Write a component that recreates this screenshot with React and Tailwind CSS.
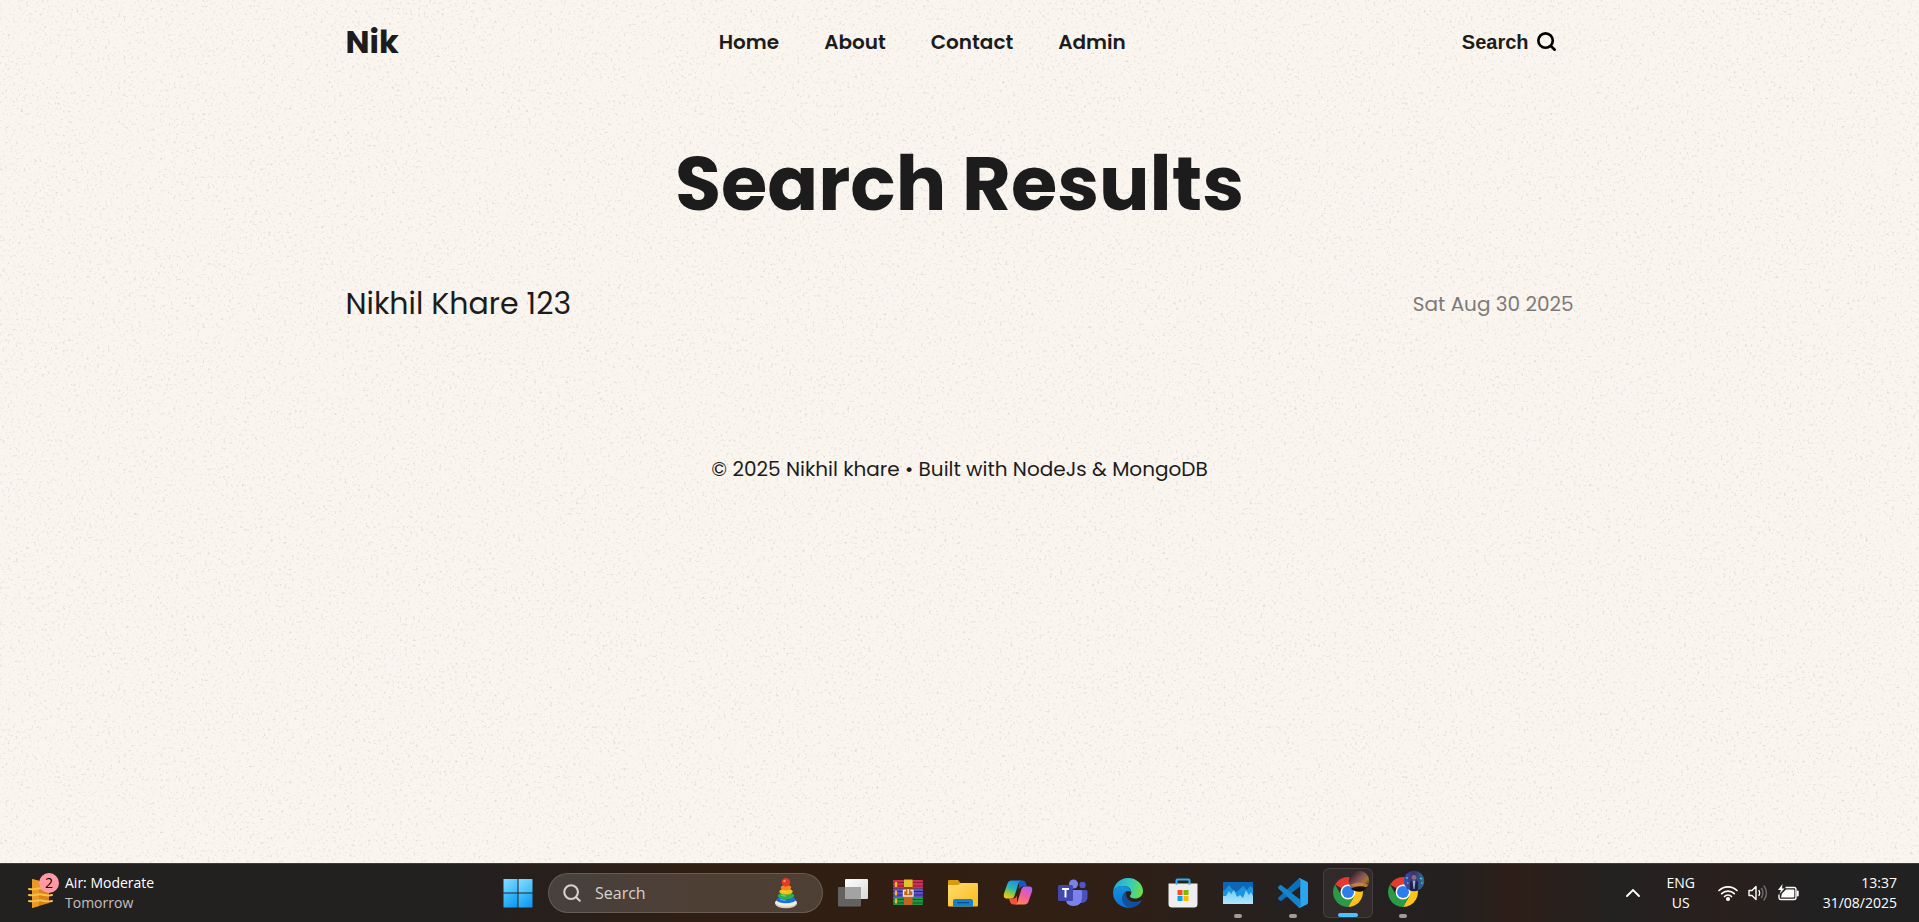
import React from 'react';

const NAV = ['Home', 'About', 'Contact', 'Admin'];
const POSTS = [{ title: 'Nikhil Khare 123', date: 'Sat Aug 30 2025' }];

function Grain() {
  return (
    <svg aria-hidden="true" className="absolute inset-0 -z-10 h-full w-full">
      <filter id="grain" x="0" y="0" width="100%" height="100%" colorInterpolationFilters="sRGB">
        <feTurbulence type="fractalNoise" baseFrequency="0.38" numOctaves="4" seed="7" />
        <feColorMatrix values="0 0 0 0 0.45  0 0 0 0 0.44  0 0 0 0 0.42  0.65 0 0 0 -0.375" />
      </filter>
      <rect width="100%" height="100%" filter="url(#grain)" />
    </svg>
  );
}

function SearchIcon({ className, strokeWidth = 2.3 }) {
  return (
    <svg viewBox="0 0 20 20" className={className} fill="none" stroke="currentColor" strokeWidth={strokeWidth} strokeLinecap="round">
      <circle cx="9" cy="9" r="7.6" />
      <path d="M14.6 14.8 18.6 18.6" />
    </svg>
  );
}

function WeatherIcon() {
  return (
    <svg viewBox="0 0 26 32" className="h-8 w-[26px]">
      <path d="M4 2 21 6V26L4 31Z" fill="#d98218" />
      <path d="M4 2 11 4V29L4 31Z" fill="#ea9a24" />
      <g fill="none" stroke="#f7c04a" strokeWidth="2" strokeLinecap="round">
        <path d="M1 12c5 1.500 8-1.500 13-.5s7 1.500 10 .5" />
        <path d="M1 18c5 1.500 8-1.500 13-.5s7 1.500 10 .5" />
        <path d="M1 24c5 1.500 8-1.500 13-.5s7 1.500 10 .5" />
      </g>
    </svg>
  );
}

function StartIcon() {
  return (
    <svg viewBox="0 0 30 30" className="h-[30px] w-[30px]">
      <defs>
        <linearGradient id="win" x1="0" y1="0" x2="1" y2="1">
          <stop offset="0" stopColor="#86dcff" />
          <stop offset="1" stopColor="#36b9f8" />
        </linearGradient>
        <linearGradient id="win2" x1="0" y1="0" x2="1" y2="1">
          <stop offset="0" stopColor="#47c5fb" />
          <stop offset="1" stopColor="#0b93f0" />
        </linearGradient>
      </defs>
      <path d="M1 1h13.500v13.500H.5V1.500z" fill="url(#win)" />
      <path d="M15.500 1H29q.5 0 .5.500v13h-14z" fill="url(#win)" />
      <path d="M.5 15.500h14v14H1q-.5 0-.5-.5z" fill="url(#win2)" />
      <path d="M15.500 15.500h14V29q0 .5-.5.500H15.500z" fill="url(#win2)" />
    </svg>
  );
}

function ToyIcon() {
  return (
    <svg viewBox="0 0 24 32" className="h-8 w-6">
      <ellipse cx="12" cy="26.500" rx="11" ry="4.800" fill="#d8cdb8" />
      <ellipse cx="12" cy="25.500" rx="11" ry="4" fill="#f3ecdc" />
      <ellipse cx="12" cy="22.700" rx="9.500" ry="3.600" fill="#1673dd" />
      <ellipse cx="12" cy="18.800" rx="8.200" ry="3.300" fill="#2fae4a" />
      <ellipse cx="12" cy="14.600" rx="6.700" ry="3" fill="#f2c21b" />
      <ellipse cx="12" cy="10.600" rx="5.200" ry="2.800" fill="#f5831f" />
      <circle cx="12" cy="5.300" r="4.200" fill="#e33a25" />
      <circle cx="10.500" cy="4" r="1.300" fill="#ff8368" />
      <path d="M6 22q3 1.500 6 1.200M7 18q2 1.200 5 1M8 14q2 1 4 .8" stroke="#fff" strokeOpacity=".4" fill="none" />
    </svg>
  );
}

function TaskViewIcon() {
  return (
    <svg viewBox="0 0 30 30" className="h-[30px] w-[30px]">
      <defs>
        <linearGradient id="tv" x1="0" y1="0" x2="1" y2="1">
          <stop offset="0" stopColor="#ffffff" />
          <stop offset="1" stopColor="#d9d9d9" />
        </linearGradient>
      </defs>
      <rect x="7" y="1" width="23" height="20" rx="1" fill="url(#tv)" />
      <rect y="9" width="23" height="19.500" rx="1" fill="#636261" />
      <rect x="7" y="9" width="16" height="12" fill="#a3a3a3" />
    </svg>
  );
}

function ArchiveIcon() {
  return (
    <svg viewBox="0 0 30 30" className="h-[30px] w-[30px]">
      <rect y="2" width="30" height="8.500" rx="1" fill="#d22f55" />
      <path d="M0 4.500h30M0 8h30" stroke="#8a1733" />
      <rect y="10.500" width="30" height="8.500" rx="1" fill="#5a52c4" />
      <path d="M0 13.500h30M0 17h30" stroke="#2c2678" />
      <rect y="19" width="30" height="8" rx="1" fill="#1f9442" />
      <path d="M0 21.500h30M0 25h30" stroke="#0f5a26" />
      <path d="M3 4v5M3 12.500v5M3 20.500v5" stroke="#f0b52c" strokeWidth="2.400" />
      <rect x="11" y="2" width="8.500" height="25" fill="#c0661e" />
      <rect x="11" y="1.500" width="8.500" height="7.500" fill="#e2c12e" />
      <rect x="11" y="9" width="8.500" height="2" fill="#8a4210" />
      <path d="M13 12.500h-2.500v5.500h9.500v-5.500H17.500M15.200 11v5" stroke="#eee5dc" strokeWidth="1.400" fill="none" />
    </svg>
  );
}

function FolderIcon() {
  return (
    <svg viewBox="0 0 30 30" className="h-[30px] w-[30px]">
      <defs>
        <linearGradient id="fo" x1="0" y1="0" x2="1" y2="1">
          <stop offset="0" stopColor="#ffdb6e" />
          <stop offset="1" stopColor="#f9bc1c" />
        </linearGradient>
      </defs>
      <path d="M0 3q0-1 1-1h9l3 3.500V10H0z" fill="#dc9a0a" />
      <path d="M0 7h10l3-2h16q1 0 1 1v21.500q0 1-1 1H1q-1 0-1-1z" fill="url(#fo)" />
      <path d="M5 28.500V23q0-2 2-2h16q2 0 2 2v5.500z" fill="#1580cf" />
      <path d="M9 24.700h12" stroke="#0a4f8f" strokeWidth="1.200" />
    </svg>
  );
}

function CopilotIcon() {
  return (
    <svg viewBox="0 0 30 30" className="h-[30px] w-[30px]">
      <defs>
        <linearGradient id="cp1" x1=".7" y1="0" x2=".3" y2="1">
          <stop offset="0" stopColor="#1b8df0" />
          <stop offset=".45" stopColor="#2ab7b0" />
          <stop offset=".75" stopColor="#9dc63b" />
          <stop offset="1" stopColor="#f6c51b" />
        </linearGradient>
        <linearGradient id="cp2" x1=".8" y1="0" x2=".2" y2="1">
          <stop offset="0" stopColor="#a862f0" />
          <stop offset=".45" stopColor="#ef5aa5" />
          <stop offset="1" stopColor="#ff8a4a" />
        </linearGradient>
      </defs>
      <path d="M16 2.500h3.500q2.500 0 3.500 3l1 3h-4q-3 0-4 3z" fill="#1557c9" />
      <path d="M14 26.500h-3.500Q8 26.500 7 24l-1-3.500h4q3 0 4-3z" fill="#f4503c" />
      <path d="M8.500 2.500H18q-1.800 0-2.600 3L11.500 18q-.8 2.500-3.500 2.500H3.500Q0 20.500 1 15.500L4.500 5.500Q5.500 2.500 8.500 2.500z" fill="url(#cp1)" />
      <path d="M21.500 26.500H12q1.800 0 2.600-3L18.500 11q.8-2.500 3.500-2.500h4.500q3.500 0 2.500 5l-3.500 10q-1 3-4 3z" fill="url(#cp2)" />
    </svg>
  );
}

function TeamsIcon() {
  return (
    <svg viewBox="0 0 30 30" className="h-[30px] w-[30px]">
      <circle cx="24.500" cy="7" r="3.200" fill="#4f56c4" />
      <path d="M19 12h9q1.500 0 1.500 1.500V19q0 5-5 6H19z" fill="#4a50bd" />
      <circle cx="15.500" cy="6" r="4.500" fill="#7b83eb" />
      <path d="M8 12h14.500q1.500 0 1.500 1.500V20q-.5 8-8.500 8T8 20z" fill="#7b83eb" />
      <rect y="7" width="15" height="16" rx="1.500" fill="#4347b0" />
      <path d="M4 11h7M7.500 11v8.500" stroke="#fff" strokeWidth="1.900" />
    </svg>
  );
}

function EdgeIcon() {
  return (
    <svg viewBox="0 0 30 30" className="h-[30px] w-[30px]">
      <defs>
        <linearGradient id="ed1" x1="0" y1=".3" x2="1" y2=".5">
          <stop offset="0" stopColor="#1fa5dc" />
          <stop offset=".5" stopColor="#35c9c4" />
          <stop offset="1" stopColor="#6ade48" />
        </linearGradient>
        <linearGradient id="ed2" x1="0" y1="0" x2="0" y2="1">
          <stop offset="0" stopColor="#1494df" />
          <stop offset="1" stopColor="#0f6fd0" />
        </linearGradient>
      </defs>
      <path d="M0 14C1 5.500 7.500 0 15 0c9 0 15 6.500 15 13 0 5-4 7.500-8 7.500-3.500 0-5-1.200-5-2.300 0-1 1.300-1.500 1.300-4 0-3.200-3-6.200-7.800-6.200C4.500 8 1 11 0 14z" fill="url(#ed1)" />
      <path d="M0 15C.5 10.500 5 7.800 10 8c5 .2 8.300 3 8.300 6.200-2-2-5.300-1.700-7 .8-2.800 4.500 1 13 9.700 13.500A15 15 0 0 1 0 15z" fill="url(#ed2)" />
      <path d="M11 15.500c-5 5 0 13.500 6.500 14.300 4.500-.3 8.500-2.800 10.700-6.300.5-.8-.2-1.200-.9-.8-6.300 3-13.800 0-14.300-5.700-.1-1.200.3-2 .8-2.700-1 .1-2 .4-2.800 1.200z" fill="#11509c" />
    </svg>
  );
}

function StoreIcon() {
  return (
    <svg viewBox="0 0 30 30" className="h-[30px] w-[30px]">
      <path d="M8.500 7V2.500q0-1 1-1h11q1 0 1 1V7" fill="none" stroke="#27b1f0" strokeWidth="2" />
      <path d="M.5 5.500h29V26q0 3.500-3.500 3.500H4Q.5 29.500.5 26z" fill="#eeeeee" />
      <path d="M8.500 5.500v1M21.500 5.500v1" stroke="#1584cf" strokeWidth="2" />
      <path d="M9.500 12h5v5h-5z" fill="#f25022" />
      <path d="M15.500 12h5v5h-5z" fill="#7fba00" />
      <path d="M9.500 18h5v5h-5z" fill="#00a4ef" />
      <path d="M15.500 18h5v5h-5z" fill="#ffb900" />
    </svg>
  );
}

function MonitorIcon() {
  return (
    <svg viewBox="0 0 30 30" className="h-[30px] w-[30px]">
      <defs>
        <linearGradient id="mo" x1="0" y1="0" x2="0" y2="1">
          <stop offset="0" stopColor="#6fcdf7" />
          <stop offset="1" stopColor="#b4e6fc" />
        </linearGradient>
      </defs>
      <path d="M0 4h30v22H0z" fill="#0f66b6" />
      <path d="M0 13 3 11 6 7 9 11 13 14 17 11 20 8 24 12 27 8 30 10V26H0z" fill="#1c93dc" />
      <path d="M0 18 3 18 6 13 8 16 11 12 14 19 17 17 20 20 23 12 26 17 28 14 30 18V26H0z" fill="url(#mo)" />
    </svg>
  );
}

function CodeIcon() {
  return (
    <svg viewBox="0 0 30 30" className="h-[30px] w-[30px]">
      <path d="M22 8.500 3.500 22.700q-.8.500-1.500 0L.4 21.200q-.8-.9 0-1.700L20.500.8q1-.8 1.500-.5z" fill="#0c70b8" />
      <path d="M22 21.500 3.500 7.300q-.8-.5-1.500 0L.4 8.800q-.8.900 0 1.700L20.500 29.200q1 .8 1.500.5z" fill="#1684cc" />
      <path d="M22 .2 28.800 3.500Q30 4 30 5.500v19q0 1.500-1.200 2L22 29.800q-1 .3-1.800-.5 2 .5 2-1.800v-25q0-2.300-2-1.800Q21-.1 22 .2z" fill="#2aa6f0" />
    </svg>
  );
}

function ChromeIcon({ avatar }) {
  return (
    <svg viewBox="0 0 38 38" className="-mt-2 ml-2 h-[38px] w-[38px]">
      <defs>
        <linearGradient id="av1" x1="0" y1="0" x2="1" y2="1">
          <stop offset="0" stopColor="#0c0909" />
          <stop offset=".45" stopColor="#85525a" />
          <stop offset=".65" stopColor="#a5753a" />
          <stop offset="1" stopColor="#120b08" />
        </linearGradient>
        <linearGradient id="av2" x1="0" y1="0" x2="1" y2="0">
          <stop offset="0" stopColor="#3d52b0" />
          <stop offset=".5" stopColor="#3a3270" />
          <stop offset="1" stopColor="#2b7596" />
        </linearGradient>
      </defs>
      <path d="M15 22 2.010 14.500A15 15 0 0 1 27.990 14.500z" fill="#e33b2e" />
      <path d="M15 14.500H27.990A15 15 0 0 1 15 37L21.500 25.700z" fill="#fcc31a" />
      <path d="M2.010 14.500A15 15 0 0 0 15 37L21.500 25.750 15 22 8.500 25.750z" fill="#2a9a47" />
      <circle cx="15" cy="22" r="7.500" fill="#fff" />
      <circle cx="15" cy="22" r="6" fill="#2f7cec" />
      {avatar === 'sunset' ? (
        <g>
          <circle cx="26" cy="11" r="10.300" fill="url(#av1)" />
          <path d="M17 15q9-5 18 0-2 4-9 2-6 0-9-2z" fill="#d58a35" opacity=".75" />
          <path d="M18 18.500q8-4 16-1-4 5-9 4-5-.5-7-3z" fill="#17100c" />
        </g>
      ) : (
        <g>
          <circle cx="26" cy="11" r="10.300" fill="url(#av2)" />
          <path d="M22 20V13q0-2.500 4-3 4 .5 4 3v7q-4 2-8 0z" fill="#1c2148" />
          <path d="M24.500 10.500h3L26.500 19h-1z" fill="#9aa9e4" />
          <circle cx="26" cy="7.500" r="2.400" fill="#8c6a7c" />
          <path d="M18 8h2M32 8l2 1M19 13h1.500M33 13h1.500" stroke="#43bcd8" strokeWidth="1.500" />
        </g>
      )}
    </svg>
  );
}

const APPS = [
  { name: 'Task View', icon: <TaskViewIcon /> },
  { name: 'WinRAR', icon: <ArchiveIcon /> },
  { name: 'File Explorer', icon: <FolderIcon /> },
  { name: 'Copilot', icon: <CopilotIcon /> },
  { name: 'Teams', icon: <TeamsIcon /> },
  { name: 'Edge', icon: <EdgeIcon /> },
  { name: 'Microsoft Store', icon: <StoreIcon /> },
  { name: 'Task Manager', icon: <MonitorIcon />, running: true },
  { name: 'Visual Studio Code', icon: <CodeIcon />, running: true },
  { name: 'Chrome', icon: <ChromeIcon avatar="sunset" />, active: true },
  { name: 'Chrome, second profile', icon: <ChromeIcon avatar="person" />, running: true },
];

function AppButton({ app }) {
  return (
    <button
      type="button"
      aria-label={app.name}
      className={
        app.active
          ? 'relative flex size-[50px] items-center justify-center rounded-md border border-white/10 bg-white/5'
          : 'relative flex size-[50px] items-center justify-center rounded-md'
      }
    >
      {app.icon}
      {app.active && <span className="absolute bottom-0 h-1 w-5 rounded-full bg-[#4cc2ff]" />}
      {app.running && <span className="absolute bottom-0 h-1 w-2 rounded-full bg-[#a19c99]" />}
    </button>
  );
}

function Tray() {
  return (
    <div className="flex items-center justify-end pr-[22px] text-sm leading-5 text-white">
      <button type="button" aria-label="Show hidden icons" className="px-3">
        <svg viewBox="0 0 16 10" className="h-[10px] w-4" fill="none" stroke="currentColor" strokeWidth="1.900" strokeLinecap="round">
          <path d="M2 8 8 2l6 6" />
        </svg>
      </button>
      <button type="button" className="ml-1 w-12 text-center">
        ENG
        <br />
        US
      </button>
      <button type="button" aria-label="Network, volume and battery" className="ml-3 flex items-center gap-2">
        <svg viewBox="0 0 22 18" className="h-[18px] w-[22px]" fill="none" stroke="currentColor" strokeWidth="1.700" strokeLinecap="round">
          <path d="M2 6.500a13 13 0 0 1 18 0M4.700 9.600a9 9 0 0 1 12.600 0M7.500 12.500a5 5 0 0 1 7 0" />
          <circle cx="11" cy="15" r="1.200" fill="currentColor" />
        </svg>
        <svg viewBox="0 0 22 18" className="h-[18px] w-[22px]" fill="none" stroke="currentColor" strokeWidth="1.400" strokeLinecap="round" strokeLinejoin="round">
          <path d="M2 6.500h3l4-4v13l-4-4H2z" />
          <path d="M12 6.500q1.500 2.500 0 5" />
          <path d="M14.500 4.500q3 4.500 0 9M17 2q5 7 0 14" opacity=".35" />
        </svg>
        <svg viewBox="0 0 22 18" className="h-[18px] w-[22px]" fill="none" stroke="currentColor" strokeWidth="1.400" strokeLinejoin="round">
          <path d="M8.500 3.500H17q2 0 2 2v8q0 2-2 2H4q-2 0-2-2v-3" />
          <path d="M9 5.500h7.500q.8 0 .8.800v6.500q0 .8-.8.800H4L5 9.500z" fill="currentColor" stroke="none" />
          <path d="M20.700 7.500v4" strokeWidth="2" strokeLinecap="round" />
          <path d="M5.500 0 1 6h3L2.500 10 7.500 4.500H5z" fill="currentColor" stroke="none" />
        </svg>
      </button>
      <button type="button" className="ml-6 text-right">
        13:37
        <br />
        31/08/2025
      </button>
    </div>
  );
}

function Taskbar() {
  return (
    <aside
      aria-label="Taskbar"
      className="grid h-[59px] grid-cols-[1fr_auto_1fr] items-center border-t border-[#3f3b39] bg-[linear-gradient(90deg,#232020_0%,#232020_24%,#301e12_37%,#301f14_57%,#26211f_66%,#24201f_76%,#2e1e18_79%,#222121_84%,#2a201e_90%,#222121_94%)] font-['Open_Sans','Noto_Sans',sans-serif]"
    >
      <button type="button" className="flex items-center pl-7 text-left text-sm leading-5">
        <span className="relative">
          <WeatherIcon />
          <span className="absolute -top-1 left-[11px] flex size-5 items-center justify-center rounded-full bg-[#ff99a4] text-sm leading-5 text-black">
            2
          </span>
        </span>
        <span className="ml-[11px]">
          <span className="block text-white">Air: Moderate</span>
          <span className="block text-[#c3c1c0]">Tomorrow</span>
        </span>
      </button>
      <div className="flex items-center gap-[5px] pl-[2px]">
        <button type="button" aria-label="Start" className="flex size-[50px] items-center justify-center">
          <StartIcon />
        </button>
        <label className="flex h-10 w-[275px] items-center rounded-full border border-white/15 bg-white/15 px-3.5 text-[#d6d2cf]">
          <SearchIcon className="size-[18px] shrink-0" />
          <input
            type="text"
            aria-label="Search Windows"
            placeholder="Search"
            className="ml-3.5 w-full min-w-0 bg-transparent text-base outline-none placeholder:text-[#d6d2cf]"
          />
          <span className="mr-2.5 shrink-0">
            <ToyIcon />
          </span>
        </label>
        {APPS.map((app) => (
          <AppButton key={app.name} app={app} />
        ))}
      </div>
      <Tray />
    </aside>
  );
}

export default function App() {
  return (
    <div className="flex min-h-screen flex-col bg-[#faf5ef] font-['Poppins','Inter',sans-serif] text-[#1c1c1c]">
      <div className="relative isolate flex flex-1 flex-col">
        <Grain />
        <div className="mx-auto w-[64%]">
          <header className="flex h-[83px] items-center justify-between">
            <a href="#" className="text-[32px] leading-10 font-bold">
              Nik
            </a>
            <nav>
              <ul className="flex items-center gap-[45px] text-xl font-semibold">
                {NAV.map((item) => (
                  <li key={item}>
                    <a href="#">{item}</a>
                  </li>
                ))}
              </ul>
            </nav>
            <button type="button" className="flex items-center gap-2 pr-[18px] pl-4 font-['Liberation_Sans',sans-serif] text-xl font-semibold">
              Search
              <SearchIcon className="size-[19px] text-black" strokeWidth={2.8} />
            </button>
          </header>
          <main>
            <h1 className="pt-[53px] text-center text-[75px] leading-[96px] font-bold">Search Results</h1>
            <ul className="pt-[50px]">
              {POSTS.map((post) => (
                <li key={post.title}>
                  <a href="#" className="flex items-center justify-between">
                    <span className="text-[30px] leading-11">{post.title}</span>
                    <span className="text-xl text-[#7c7a78]">{post.date}</span>
                  </a>
                </li>
              ))}
            </ul>
          </main>
          <footer className="pt-[129px] pb-10 text-center text-xl leading-7">
            © 2025 Nikhil khare • Built with NodeJs &amp; MongoDB
          </footer>
        </div>
      </div>
      <Taskbar />
    </div>
  );
}
